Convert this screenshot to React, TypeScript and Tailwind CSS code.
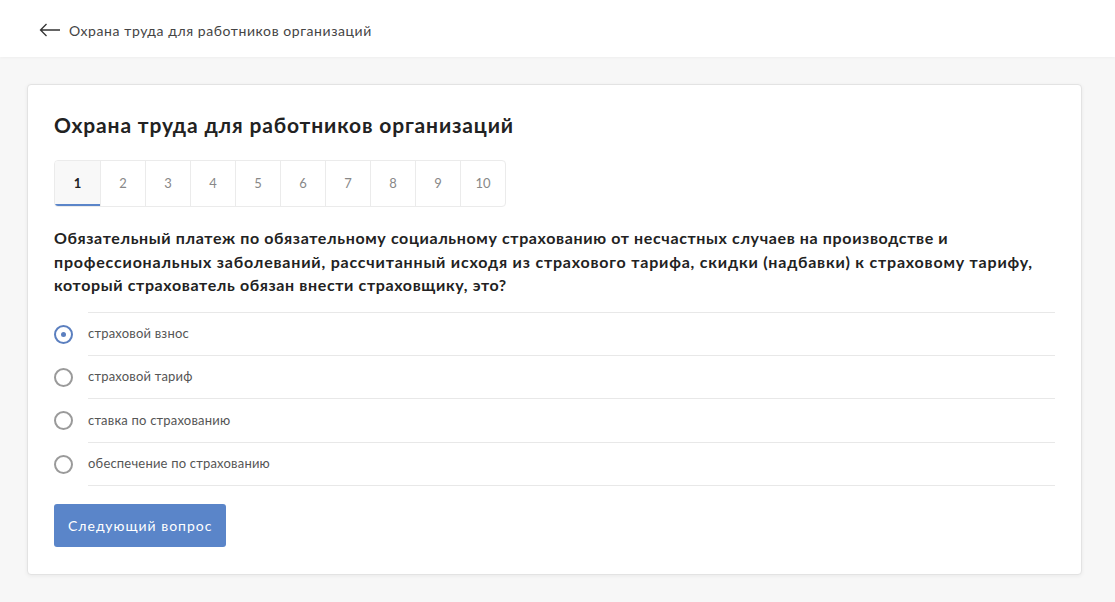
import { useState } from 'react';

const answers = [
  'страховой взнос',
  'страховой тариф',
  'ставка по страхованию',
  'обеспечение по страхованию',
];

const tabs = [1, 2, 3, 4, 5, 6, 7, 8, 9, 10];

export default function App() {
  const [active, setActive] = useState(1);
  const [picked, setPicked] = useState(0);

  return (
    <div className="min-h-screen bg-[#f7f7f7] font-['Lato',sans-serif] text-[#222]">
      {/* Header */}
      <div className="h-[57px] bg-white flex items-center pl-[39px] pt-[3px] shadow-[0_1px_3px_rgba(0,0,0,0.04)]">
        <svg width="22" height="14" viewBox="0 0 22 14" fill="none" stroke="#333" strokeWidth="1.3">
          <path d="M21 7H1.5M7.5 1L1.5 7l6 6" />
        </svg>
        <span className="ml-[8px] text-[14px] text-[#444] tracking-[0.58px]">Охрана труда для работников организаций</span>
      </div>

      <div className="pl-[27px] pr-[33px] pt-[27px] pb-[26px]">
        <div className="bg-white border border-[#e3e3e3] rounded-[4px] shadow-[0_1px_4px_rgba(0,0,0,0.06)] px-[26px] pt-[25px] pb-[27px]">
          <h1 className="text-[21px] font-bold text-[#222] leading-[30px] tracking-[0.85px]">
            Охрана труда для работников организаций
          </h1>

          {/* Question tabs */}
          <div className="mt-[20px] inline-flex border border-[#ebebeb] rounded-[4px] overflow-hidden">
            {tabs.map((n, i) => (
              <button
                key={n}
                onClick={() => setActive(n)}
                className={`w-[45px] h-[45px] flex items-center justify-center text-[13px] ${i > 0 ? 'border-l border-[#ebebeb]' : ''} ${
                  active === n ? 'bg-[#f8f8f8] font-bold text-[#222] shadow-[inset_0_-2px_0_#5b85c9]' : 'text-[#888]'
                }`}
              >
                {n}
              </button>
            ))}
          </div>

          <p className="mt-[19px] text-[16px] font-bold leading-[23.5px] text-[#222] tracking-[0.63px]">
            Обязательный платеж по обязательному социальному страхованию от несчастных случаев на производстве и
            <br />
            <span className="tracking-[0.8px]">
              профессиональных заболеваний, рассчитанный исходя из страхового тарифа, скидки (надбавки) к страховому тарифу,
            </span>
            <br />
            который страхователь обязан внести страховщику, это?
          </p>

          {/* Answers */}
          <div className="mt-[15px]">
            <div className="ml-[34px] border-t border-[#e8e8e8]" />
            {answers.map((a, i) => (
              <label key={a} className="flex items-center cursor-pointer" onClick={() => setPicked(i)}>
                <span
                  className={`w-[19px] h-[19px] rounded-full border-2 flex items-center justify-center shrink-0 ${
                    picked === i ? 'border-[#5b7fbf]' : 'border-[#9a9a9a]'
                  }`}
                >
                  {picked === i && <span className="w-[5px] h-[5px] rounded-full bg-[#5b7fbf]" />}
                </span>
                <span className="ml-[15px] flex-1 h-[43.4px] flex items-center border-b border-[#e8e8e8] text-[13px] text-[#555] tracking-[0.2px]">
                  {a}
                </span>
              </label>
            ))}
          </div>

          <button className="mt-[18px] h-[43px] px-[14px] bg-[#5a85c9] text-white text-[14px] rounded-[3px] tracking-[1px]">
            Следующий вопрос
          </button>
        </div>
      </div>
    </div>
  );
}
